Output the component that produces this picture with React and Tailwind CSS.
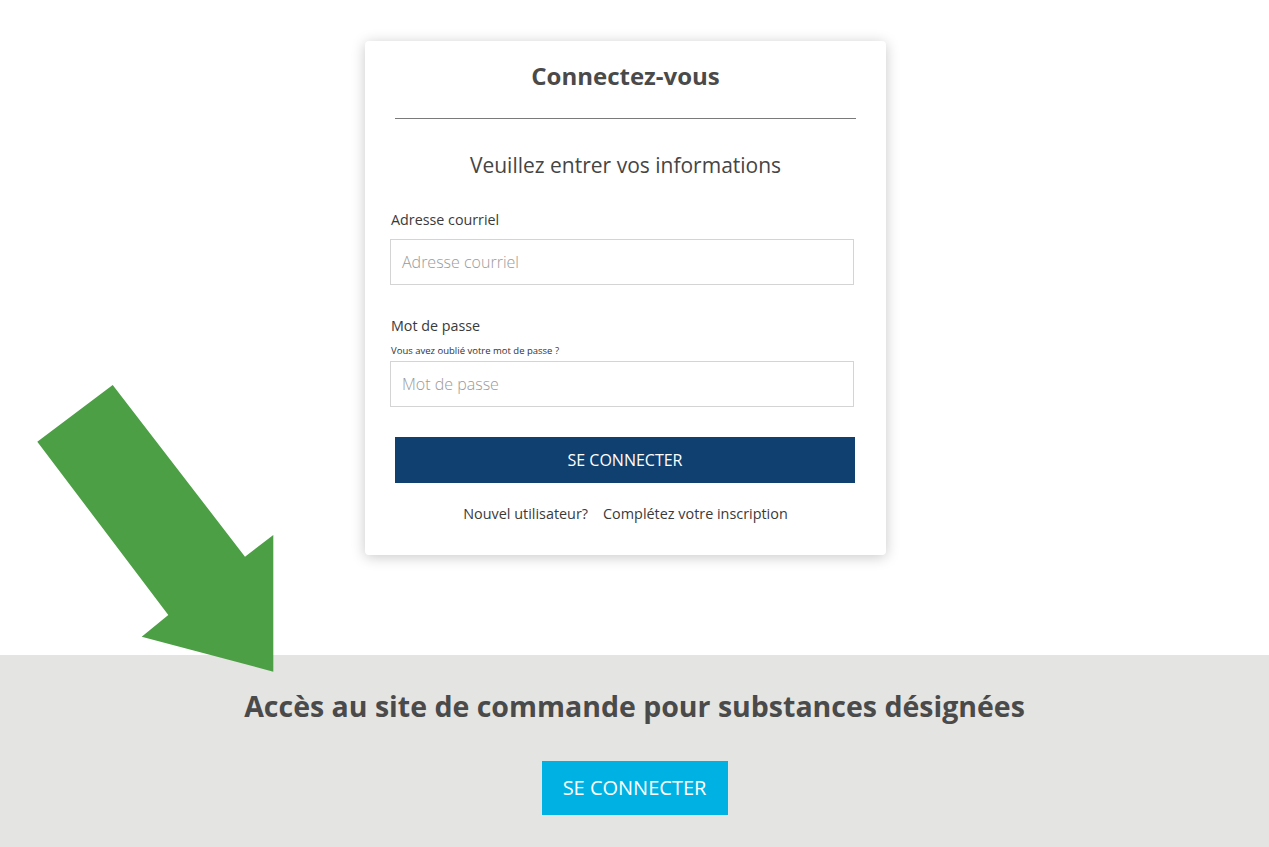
import React from "react";

export default function App() {
  return (
    <div className="relative w-[1269px] h-[847px] bg-white overflow-hidden" style={{ fontFamily: '"Open Sans", "Noto Sans", sans-serif' }}>
      <div className="h-[655px] flex justify-center pr-[18px]">
        <div className="mt-[41px] w-[521px] h-[514px] bg-white rounded-[4px] shadow-[0_2px_14px_rgba(0,0,0,0.22)] flex flex-col">
          <h1 className="mt-[18px] h-[34px] leading-[34px] text-[24px] font-bold text-center text-[#4a4a4a]">Connectez-vous</h1>
          <div className="mt-[25px] mx-[30px] h-px bg-[#7a7a7a]" />
          <p className="mt-[31px] leading-[30px] text-[21px] text-center text-[#454545]">Veuillez entrer vos informations</p>
          <label className="mt-[30px] ml-[26px] leading-[20px] text-[14.3px] text-[#3a3a3a]">Adresse courriel</label>
          <div className="mt-[9px] ml-[25px] w-[464px] h-[46px] border border-[#d4d4d4] flex items-center pl-[11px] text-[16px] font-light text-[#9a9a9a]">Adresse courriel</div>
          <label className="mt-[31px] ml-[26px] leading-[20px] text-[14.3px] text-[#3a3a3a]">Mot de passe</label>
          <p className="mt-[8px] ml-[26px] leading-[14px] text-[9.5px] text-[#333]">Vous avez oublié votre mot de passe ?</p>
          <div className="mt-[3px] ml-[25px] w-[464px] h-[46px] border border-[#d4d4d4] flex items-center pl-[11px] text-[16px] font-light text-[#9a9a9a]">Mot de passe</div>
          <button className="mt-[30px] ml-[30px] w-[460px] h-[46px] bg-[#0f406f] text-white text-[16px] flex items-center justify-center">SE CONNECTER</button>
          <p className="mt-[21px] leading-[20px] text-[14.4px] text-center text-[#3a3a3a]">
            <span>Nouvel utilisateur?</span>
            <span className="ml-[15px]">Complétez votre inscription</span>
          </p>
        </div>
      </div>
      <div className="h-[192px] bg-[#e4e4e2] flex flex-col items-center">
        <h2 className="mt-[31px] leading-[40px] text-[28.5px] font-bold text-[#4a4a4a]">Accès au site de commande pour substances désignées</h2>
        <button className="mt-[35px] w-[186px] h-[54px] bg-[#00b2e3] text-white text-[20px] flex items-center justify-center">SE CONNECTER</button>
      </div>
      <svg className="absolute left-0 top-0 pointer-events-none" width="1269" height="847">
        <polygon
          points="112.7,385 37.3,441.7 168.3,615 141.7,636.7 273.3,671.7 273.3,535 245,556.7"
          fill="#4c9f45"
        />
      </svg>
    </div>
  );
}
